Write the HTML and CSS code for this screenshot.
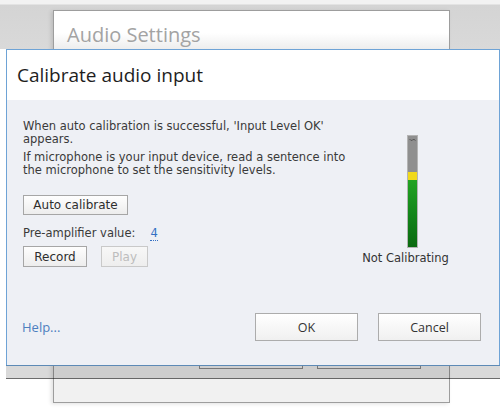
FILE: index.html
```html
<!DOCTYPE html>
<html lang="en">
<head>
<meta charset="utf-8">
<title>Calibrate audio input</title>
<link rel="stylesheet" href="styles.css">
</head>
<body>
<div class="desktop">
  <div class="back-window">
    <div class="back-title">Audio Settings</div>
    <div class="back-footer">
      <span class="back-btn"></span>
      <span class="back-btn"></span>
    </div>
  </div>

  <div class="dialog">
    <div class="dlg-header">
      <h1 class="dlg-title">Calibrate audio input</h1>
    </div>
    <div class="dlg-body">
      <div class="main">
        <div class="left">
          <p class="para">When auto calibration is successful, 'Input Level OK'<br>appears.</p>
          <p class="para para-2">If microphone is your input device, read a sentence into<br>the microphone to set the sensitivity levels.</p>
          <button class="btn btn-auto" type="button">Auto calibrate</button>
          <div class="preamp">Pre-amplifier value: <span class="preamp-val">4</span></div>
          <div class="btn-row">
            <button class="btn btn-record" type="button">Record</button>
            <button class="btn btn-play" type="button" disabled>Play</button>
          </div>
        </div>
        <div class="right">
          <div class="meter">
            <div class="meter-grey">
              <svg class="meter-mark" width="7" height="4" viewBox="0 0 7 4"><path d="M0.5 1 Q2 3.5 3.5 2 Q5 0.5 6.5 2.5" fill="none" stroke="#555" stroke-width="1"/></svg>
            </div>
            <div class="meter-yellow"></div>
            <div class="meter-green"></div>
          </div>
          <div class="status">Not Calibrating</div>
        </div>
      </div>
      <div class="footer">
        <a class="help" href="#">Help...</a>
        <div class="actions">
          <button class="dlg-btn" type="button">OK</button>
          <button class="dlg-btn" type="button">Cancel</button>
        </div>
      </div>
    </div>
  </div>
</div>
</body>
</html>
```

FILE: styles.css
```css
html, body {
  margin: 0;
  padding: 0;
  background: #ffffff;
}

.desktop {
  position: relative;
  width: 500px;
  height: 409px;
  overflow: hidden;
  background: linear-gradient(to bottom, #f2f2f2 0, #f2f2f2 4px, #d4d4d4 5px, #d9d9d9 49px, #ffffff 49px);
}

/* Back window (Audio Settings) */
.back-window {
  position: absolute;
  left: 53px;
  top: 10px;
  width: 397px;
  height: 393px;
  box-sizing: border-box;
  border: 1px solid #9d9d9d;
  background: linear-gradient(to bottom, #ffffff 0, #ffffff 22px, #ececec 39px, #f1f1f1 60px);
  box-shadow: -2px 1px 4px rgba(0, 0, 0, 0.12);
  display: flex;
  flex-direction: column;
}

.back-title {
  font-family: "Open Sans", "Noto Sans", sans-serif;
  font-size: 20px;
  line-height: 26px;
  color: #a3a3a3;
  padding: 11px 0 0 13px;
}

.back-footer {
  margin-top: auto;
  display: flex;
  justify-content: flex-end;
  gap: 14px;
  padding: 0 28px 33px 0;
}

.back-btn {
  display: block;
  width: 104px;
  height: 28px;
  box-sizing: border-box;
  border: 1px solid #8d8d8d;
  background: #f4f4f4;
}

/* Front dialog */
.dialog {
  position: absolute;
  left: 6px;
  top: 49px;
  width: 494px;
  height: 317px;
  box-sizing: border-box;
  border: 1px solid #6ea3d6;
  display: flex;
  flex-direction: column;
  background: #eef0f5;
}

.dialog::after {
  content: "";
  position: absolute;
  left: -1px;
  right: -1px;
  top: 100%;
  height: 13px;
  background: rgba(0, 0, 0, 0.15);
  border-bottom: 1px solid rgba(0, 0, 0, 0.5);
}

.dlg-header {
  height: 50px;
  box-sizing: border-box;
  background: #ffffff;
  padding: 12px 10px 0;
}

.dlg-title {
  margin: 0;
  font-family: "Open Sans", "Noto Sans", sans-serif;
  font-weight: 400;
  font-size: 19px;
  line-height: 26px;
  color: #1e1e1e;
}

.dlg-body {
  flex: 1;
  display: flex;
  flex-direction: column;
  padding: 20px 18px 24px 16px;
}

.main {
  display: grid;
  grid-template-columns: 340px 85px;
}

.left {
  display: flex;
  flex-direction: column;
  align-items: flex-start;
  font-family: "DejaVu Sans", Verdana, sans-serif;
  font-size: 11.5px;
  line-height: 13px;
  color: #3a3a3a;
}

.para {
  margin: 0;
  white-space: nowrap;
}

.para-2 {
  margin-top: 5px;
}

.btn {
  font-family: "DejaVu Sans", Verdana, sans-serif;
  font-size: 12px;
  color: #2e2e2e;
  height: 20px;
  padding: 0;
  box-sizing: border-box;
  border: 1px solid #a6a6a6;
  border-radius: 0;
  background: linear-gradient(to bottom, #fefefe, #ededed);
  line-height: 18px;
}

.btn-auto {
  width: 105px;
  margin-top: 18px;
}

.preamp {
  margin-top: 12px;
  display: flex;
  align-items: baseline;
  gap: 15px;
}

.preamp-val {
  color: #3470c4;
  border-bottom: 1px dotted #3470c4;
  line-height: 13px;
}

.btn-row {
  margin-top: 5px;
  display: flex;
  gap: 14px;
}

.btn-record {
  width: 64px;
  height: 21px;
}

.btn-play {
  width: 47px;
  height: 21px;
  color: #bdbdbd;
  border-color: #c9c9c9;
  background: linear-gradient(to bottom, #f7f7f7, #eeeeee);
}

.right {
  display: flex;
  flex-direction: column;
  align-items: center;
}

.meter {
  margin-top: 15px;
  margin-left: 14px;
  width: 11px;
  height: 113px;
  box-sizing: border-box;
  border: 1px solid #b4b4b4;
  display: flex;
  flex-direction: column;
}

.meter-grey {
  flex: 1;
  background: #8f8f8f;
  display: flex;
  justify-content: center;
  padding-top: 2px;
}

.meter-mark {
  display: block;
}

.meter-yellow {
  height: 8px;
  background: #f1d91c;
}

.meter-green {
  height: 67px;
  background: linear-gradient(to bottom, #22a322, #13861a 50%, #0b6a10);
}

.status {
  margin-top: 3px;
  font-family: "DejaVu Sans", Verdana, sans-serif;
  font-size: 11.5px;
  line-height: 14px;
  color: #333333;
  white-space: nowrap;
}

.footer {
  margin-top: auto;
  display: flex;
  align-items: center;
  justify-content: space-between;
}

.help {
  font-family: "Open Sans", "Noto Sans", sans-serif;
  font-size: 13px;
  color: #4d7fbf;
  text-decoration: none;
  margin-left: -1px;
}

.actions {
  display: flex;
  gap: 20px;
}

.dlg-btn {
  width: 103px;
  height: 28px;
  box-sizing: border-box;
  border: 1px solid #acacac;
  border-radius: 0;
  background: linear-gradient(to bottom, #ffffff, #f0f0f0);
  font-family: "Open Sans", "Noto Sans", sans-serif;
  font-size: 12.5px;
  color: #333333;
  padding: 0;
}
```
